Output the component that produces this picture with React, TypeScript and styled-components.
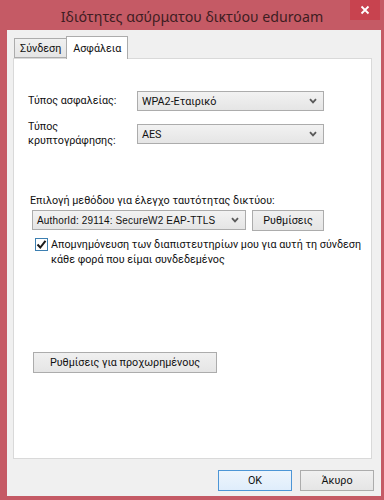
import React from "react";
import styled, { createGlobalStyle } from "styled-components";

const GlobalStyle = createGlobalStyle`
  html, body {
    margin: 0;
    padding: 0;
    background: #c55a65;
  }
  * {
    box-sizing: border-box;
  }
`;

const Window = styled.div`
  width: 384px;
  height: 500px;
  background: #c55a65;
  display: flex;
  flex-direction: column;
  font-family: Roboto, "Noto Sans", sans-serif;
  font-size: 10.75px;
  color: #111;
`;

const TitleBar = styled.div`
  height: 30px;
  display: flex;
  align-items: center;
  justify-content: center;
  position: relative;
`;

const Title = styled.div`
  font-family: "Noto Sans", sans-serif;
  font-size: 14.2px;
  color: #3e1d22;
  margin-top: 2px;
`;

const CloseBox = styled.div`
  position: absolute;
  top: 0;
  right: 4px;
  width: 30px;
  height: 20px;
  background: #c8434f;
  display: flex;
  align-items: center;
  justify-content: center;
`;

const Client = styled.div`
  flex: 1;
  margin: 0 3px 4px 7px;
  background: #f0f0f0;
  display: flex;
  flex-direction: column;
  padding: 6px 0 0 6px;
`;

const TabStrip = styled.div`
  display: flex;
  align-items: flex-end;
  height: 22px;
  padding-left: 1px;
  position: relative;
  z-index: 1;
`;

const Tab = styled.div<{ $active?: boolean }>`
  height: ${({ $active }) => ($active ? "23px" : "20px")};
  margin-bottom: ${({ $active }) => ($active ? "-1px" : "0")};
  margin-left: ${({ $active }) => ($active ? "-1px" : "0")};
  padding: ${({ $active }) => ($active ? "0 6px" : "1px 5px 0")};
  display: flex;
  align-items: center;
  border: 1px solid #acacac;
  border-bottom: ${({ $active }) => ($active ? "none" : "1px solid #acacac")};
  background: ${({ $active }) =>
    $active ? "#ffffff" : "linear-gradient(#f0f0f0, #e5e5e5)"};
`;

const Panel = styled.div`
  width: 359px;
  height: 401px;
  background: #ffffff;
  border: 1px solid #d9d9d9;
  padding: 32px 0 0 14px;
  display: flex;
  flex-direction: column;
`;

const FieldRow = styled.div<{ $gap?: number }>`
  display: flex;
  align-items: center;
  min-height: 20px;
  margin-top: ${({ $gap }) => $gap ?? 0}px;
`;

const Label = styled.div`
  width: 109px;
  line-height: 14px;
`;

const Select = styled.div<{ $width: number }>`
  width: ${({ $width }) => $width}px;
  height: 20px;
  border: 1px solid #acacac;
  background: linear-gradient(#f2f2f2, #e5e5e5);
  display: flex;
  align-items: center;
  justify-content: space-between;
  padding: 0 6px 0 4px;
`;

const SelectText = styled.span<{ $classic?: boolean }>`
  font-family: ${({ $classic }) =>
    $classic ? '"Liberation Sans", Arial, sans-serif' : 'Roboto, "Noto Sans", sans-serif'};
  font-size: ${({ $classic }) => ($classic ? "10px" : "10.75px")};
  letter-spacing: ${({ $classic }) => ($classic ? "0.15px" : "normal")};
  white-space: nowrap;
`;

const SectionLabel = styled.div`
  margin-top: 45px;
  padding-left: 2px;
  line-height: 16px;
`;

const MethodRow = styled.div`
  display: flex;
  gap: 6px;
  margin-top: 1px;
  padding-left: 4px;
`;

const Button = styled.div<{ $width: number; $default?: boolean }>`
  width: ${({ $width }) => $width}px;
  height: 21px;
  border: 1px solid ${({ $default }) => ($default ? "#4d96d6" : "#acacac")};
  background: ${({ $default }) =>
    $default ? "linear-gradient(#eef5fc, #dfedfb)" : "linear-gradient(#f0f0f0, #e5e5e5)"};
  display: flex;
  align-items: center;
  justify-content: center;
  white-space: nowrap;
`;

const CheckRow = styled.div`
  display: flex;
  align-items: flex-start;
  gap: 3px;
  margin-top: 6px;
  padding-left: 7px;
`;

const Box = styled.div`
  width: 13px;
  height: 13px;
  border: 1px solid #3c7fb1;
  background: #fff;
  margin-top: 1px;
  display: flex;
  align-items: center;
  justify-content: center;
  flex-shrink: 0;
`;

const CheckText = styled.div`
  line-height: 15px;
  white-space: nowrap;
`;

const AdvancedRow = styled.div`
  margin-top: 85px;
  padding-left: 5px;
`;

const Footer = styled.div`
  display: flex;
  justify-content: flex-end;
  gap: 8px;
  padding: 11px 7px 0 0;
`;

function Chevron() {
  return (
    <svg width="8" height="6" viewBox="0 0 8 6">
      <polyline points="1,1.2 4,4.4 7,1.2" fill="none" stroke="#5a5a5a" strokeWidth="1.8" />
    </svg>
  );
}

export default function App() {
  return (
    <>
      <GlobalStyle />
      <Window>
        <TitleBar>
          <Title>Ιδιότητες ασύρματου δικτύου eduroam</Title>
          <CloseBox>
            <svg width="10" height="10" viewBox="0 0 10 10">
              <path d="M1.5 1.5 L8.5 8.5 M8.5 1.5 L1.5 8.5" stroke="#fff" strokeWidth="1.8" />
            </svg>
          </CloseBox>
        </TitleBar>
        <Client>
          <TabStrip>
            <Tab>Σύνδεση</Tab>
            <Tab $active>Ασφάλεια</Tab>
          </TabStrip>
          <Panel>
            <FieldRow>
              <Label>Τύπος ασφαλείας:</Label>
              <Select $width={187}>
                <SelectText>WPA2-Εταιρικό</SelectText>
                <Chevron />
              </Select>
            </FieldRow>
            <FieldRow $gap={9}>
              <Label>
                Τύπος
                <br />
                κρυπτογράφησης:
              </Label>
              <Select $width={187}>
                <SelectText>AES</SelectText>
                <Chevron />
              </Select>
            </FieldRow>
            <SectionLabel>Επιλογή μεθόδου για έλεγχο ταυτότητας δικτύου:</SectionLabel>
            <MethodRow>
              <Select $width={214}>
                <SelectText $classic>AuthorId: 29114: SecureW2 EAP-TTLS</SelectText>
                <Chevron />
              </Select>
              <Button $width={72}>Ρυθμίσεις</Button>
            </MethodRow>
            <CheckRow>
              <Box>
                <svg width="11" height="11" viewBox="0 0 11 11">
                  <polyline points="1.5,5.5 4.3,8.5 9.5,1.8" fill="none" stroke="#1a1a1a" strokeWidth="2" />
                </svg>
              </Box>
              <CheckText>
                Απομνημόνευση των διαπιστευτηρίων μου για αυτή τη σύνδεση
                <br />
                κάθε φορά που είμαι συνδεδεμένος
              </CheckText>
            </CheckRow>
            <AdvancedRow>
              <Button $width={184}>Ρυθμίσεις για προχωρημένους</Button>
            </AdvancedRow>
          </Panel>
          <Footer>
            <Button $width={74} $default>
              OK
            </Button>
            <Button $width={74}>Άκυρο</Button>
          </Footer>
        </Client>
      </Window>
    </>
  );
}
